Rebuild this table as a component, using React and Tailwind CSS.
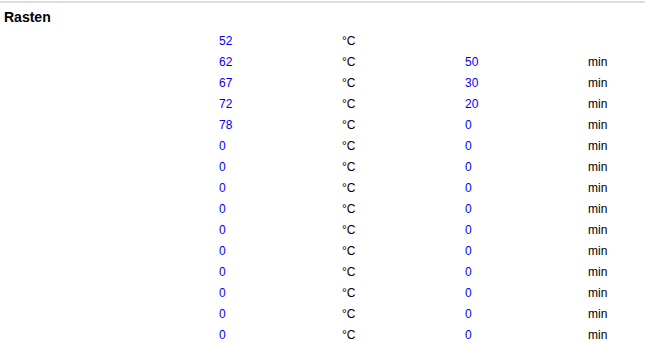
import React from 'react';

const rasten = [
  { temp: 52, time: null },
  { temp: 62, time: 50 },
  { temp: 67, time: 30 },
  { temp: 72, time: 20 },
  { temp: 78, time: 0 },
  ...Array.from({ length: 10 }, () => ({ temp: 0, time: 0 })),
];

const App = () => {
  return (
    <div className="w-[645px] h-[344px] overflow-hidden bg-white font-['Liberation_Sans',Arial,sans-serif] text-[12px] text-black">
      <div className="mt-px h-[2px] bg-[#dcdcdc]" />
      <h2 className="px-1 pt-[6px] text-[14px] font-bold leading-[17px]">Rasten</h2>
      <div className="mt-[5px]">
        {rasten.map((r, i) => (
          <div key={i} className="grid grid-cols-[219px_123px_123px_123px_1fr] h-[21px] leading-[21px]">
            <span />
            <span className="text-[#0000ff]">{r.temp}</span>
            <span>°C</span>
            <span className="text-[#0000ff]">{r.time ?? ''}</span>
            <span>{r.time === null ? '' : 'min'}</span>
          </div>
        ))}
      </div>
    </div>
  );
};

export default App;
